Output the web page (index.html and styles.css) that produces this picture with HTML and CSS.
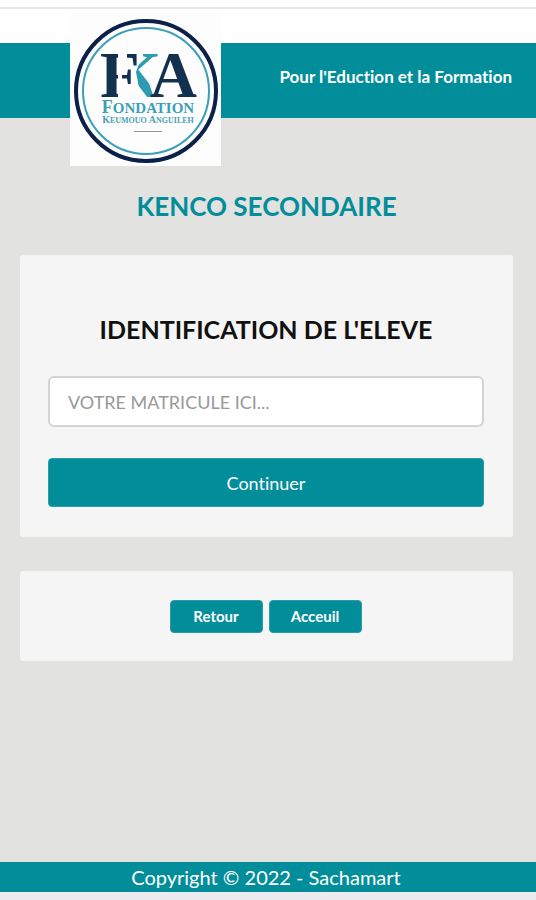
FILE: index.html
```
<!DOCTYPE html>
<html lang="fr">
<head>
  <meta charset="UTF-8">
  <meta name="viewport" content="width=device-width, initial-scale=1">
  <title>Kenco Secondaire - Identification</title>
  <link rel="stylesheet" href="styles.css">
</head>
<body>
  <div class="topbar"></div>
  <header class="header">
    <svg class="logo" viewBox="0 0 151 152" role="img" aria-label="Fondation Keumouo Anguileh">
      <defs>
        <clipPath id="clip-f">
          <path d="M24 30H48V92H24ZM57 30H72L68 54H57ZM52 50H62V78H52Z"/>
        </clipPath>
        <clipPath id="clip-k">
          <path d="M76 30H91V44L76 60L86 90H72L66 58Z"/>
        </clipPath>
      </defs>
      <rect width="151" height="152" fill="#fdfdfd"/>
      <circle cx="76" cy="77" r="70" fill="none" stroke="#0c2149" stroke-width="4"/>
      <circle cx="76" cy="77" r="63" fill="none" stroke="#3b9fb5" stroke-width="2"/>
      <g class="logo-letters">
        <text x="30" y="83" fill="#12304f" clip-path="url(#clip-f)">F</text>
        <text x="41" y="83" fill="#2f9bb2" clip-path="url(#clip-k)">K</text>
        <text x="80" y="83" fill="#12304f">A</text>
      </g>
      <text class="logo-name" x="78" y="99" text-anchor="middle"><tspan class="cap">F</tspan>ONDATION</text>
      <text class="logo-sub" x="78" y="109" text-anchor="middle"><tspan class="cap">K</tspan>EUMOUO <tspan class="cap">A</tspan>NGUILEH</text>
      <path d="M64 117.500H92" stroke="#929aa0"/>
    </svg>
    <p class="slogan">Pour l'Eduction et la Formation</p>
  </header>

  <main class="main">
    <h1 class="school">KENCO SECONDAIRE</h1>

    <form class="card">
      <h2><label for="matricule">IDENTIFICATION DE L'ELEVE</label></h2>
      <input class="field" id="matricule" name="matricule" type="text" placeholder="VOTRE MATRICULE ICI...">
      <button class="btn btn-block" type="submit">Continuer</button>
    </form>

    <nav class="card card-nav">
      <a class="btn btn-small" href="#retour">Retour</a>
      <a class="btn btn-small" href="#accueil">Acceuil</a>
    </nav>
  </main>

  <footer class="footer">Copyright © 2022 - Sachamart</footer>
</body>
</html>
```
FILE: styles.css
```
* {
  box-sizing: border-box;
}
body {
  margin: 0;
  min-height: 100vh;
  display: flex;
  flex-direction: column;
  background: #e2e2e0;
  font-family: Lato, "Open Sans", sans-serif;
  font-variant-ligatures: none;
  border-bottom: 8px solid #ebebf0;
}

/* Header */
.topbar {
  height: 43px;
  padding-top: 7px;
  background: #fff;
}
.topbar::before {
  content: "";
  display: block;
  height: 2px;
  background: #e8e8e8;
}
.header {
  display: flex;
  align-items: center;
  justify-content: space-between;
  height: 75px;
  padding: 0 24px 0 70px;
  background: #028d9a;
}
.logo {
  flex: none;
  width: 151px;
  height: 152px;
  margin-top: 18px;
}
.logo-letters {
  font: bold 65px "Liberation Serif", serif;
}
.logo-name {
  font: bold 15px "Liberation Serif", serif;
  fill: #3b9fb5;
}
.logo-name .cap {
  font-size: 18px;
}
.logo-sub {
  font: bold 8px "Liberation Serif", serif;
  fill: #4f9fb3;
}
.logo-sub .cap {
  font-size: 10px;
}
.slogan {
  margin: 0 0 8px;
  color: #fff;
  font-size: 17px;
  font-weight: bold;
}

/* Content */
.main {
  flex: 1;
  padding: 72px 23px 34px 20px;
}
.school {
  margin: 0 0 32px;
  color: #028d9a;
  font-size: 26px;
  line-height: 33px;
  text-align: center;
}
.card {
  margin-bottom: 34px;
  padding: 58px 29px 30px 28px;
  background: #f5f5f5;
  border-radius: 3px;
}
.card h2 {
  margin: 0 0 30px;
  color: #111;
  font-size: 25px;
  line-height: 33px;
  text-align: center;
}
.field {
  display: block;
  width: 100%;
  height: 51px;
  margin-bottom: 31px;
  padding: 0 18px;
  border: 2px solid #d4d4d4;
  border-radius: 6px;
  background: #fff;
  font: 18px Lato, sans-serif;
}
.field::placeholder {
  color: #999;
}
.btn {
  border: 1px solid #2b9ba5;
  border-radius: 4px;
  background: #028d9a;
  color: #fff;
  font: 18px Lato, sans-serif;
  font-variant-ligatures: none;
  text-align: center;
  text-decoration: none;
  cursor: pointer;
}
.btn-block {
  width: 100%;
  height: 49px;
}
.card-nav {
  display: flex;
  justify-content: center;
  gap: 6px;
  padding: 29px 30px 28px 28px;
}
.btn-small {
  width: 93px;
  font-size: 15px;
  font-weight: bold;
  line-height: 31px;
}

/* Footer */
.footer {
  padding-right: 4px;
  background: #028d9a;
  color: #fff;
  font-size: 20px;
  line-height: 30px;
  text-align: center;
}
```
